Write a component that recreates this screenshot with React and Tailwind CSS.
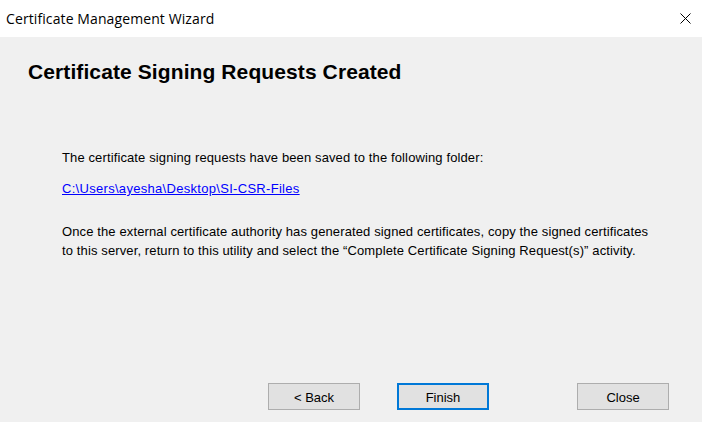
export default function App() {
  return (
    <div className="w-[702px] h-[422px] bg-[#f0f0f0] flex flex-col overflow-hidden" style={{ fontFamily: '"Liberation Sans", Arial, sans-serif' }}>
      <div className="h-[37px] bg-white flex items-center justify-between shrink-0">
        <span className="pl-[6px] text-[14px] tracking-[0.1px] text-black" style={{ fontFamily: '"Open Sans", "Liberation Sans", sans-serif' }}>Certificate Management Wizard</span>
        <svg width="11" height="11" viewBox="0 0 11 11" className="mr-[11px]">
          <path d="M0.5 0.5 L10.5 10.5 M10.5 0.5 L0.5 10.5" stroke="#000" strokeWidth="1" />
        </svg>
      </div>
      <div className="flex-1 flex flex-col">
        <h1 className="pl-[28px] pt-[22px] text-[21px] tracking-[0.1px] font-bold text-black leading-[26px]">Certificate Signing Requests Created</h1>
        <div className="pl-[62px] pt-[65px] text-[13px] tracking-[0.12px] text-[#000] leading-[16px]">
          <p>The certificate signing requests have been saved to the following folder:</p>
          <p className="pt-[15px]"><a className="text-[#0000ff] underline tracking-[0.3px]" href="#">C:\Users\ayesha\Desktop\SI-CSR-Files</a></p>
          <p className="pt-[25px] leading-[19px] w-[596px]">Once the external certificate authority has generated signed certificates, copy the signed certificates to this server, return to this utility and select the “Complete Certificate Signing Request(s)” activity.</p>
        </div>
        <div className="mt-auto mb-[12px] flex items-center">
          <button className="ml-[268px] w-[92px] h-[27px] pt-[2px] bg-[#e1e1e1] border border-[#adadad] text-[13px] text-black">&lt; Back</button>
          <button className="ml-[37px] w-[92px] h-[27px] pt-[2px] bg-[#e1e1e1] border-2 border-[#0078d7] text-[13px] text-black">Finish</button>
          <button className="ml-[88px] w-[92px] h-[27px] pt-[2px] bg-[#e1e1e1] border border-[#adadad] text-[13px] text-black">Close</button>
        </div>
      </div>
    </div>
  );
}
